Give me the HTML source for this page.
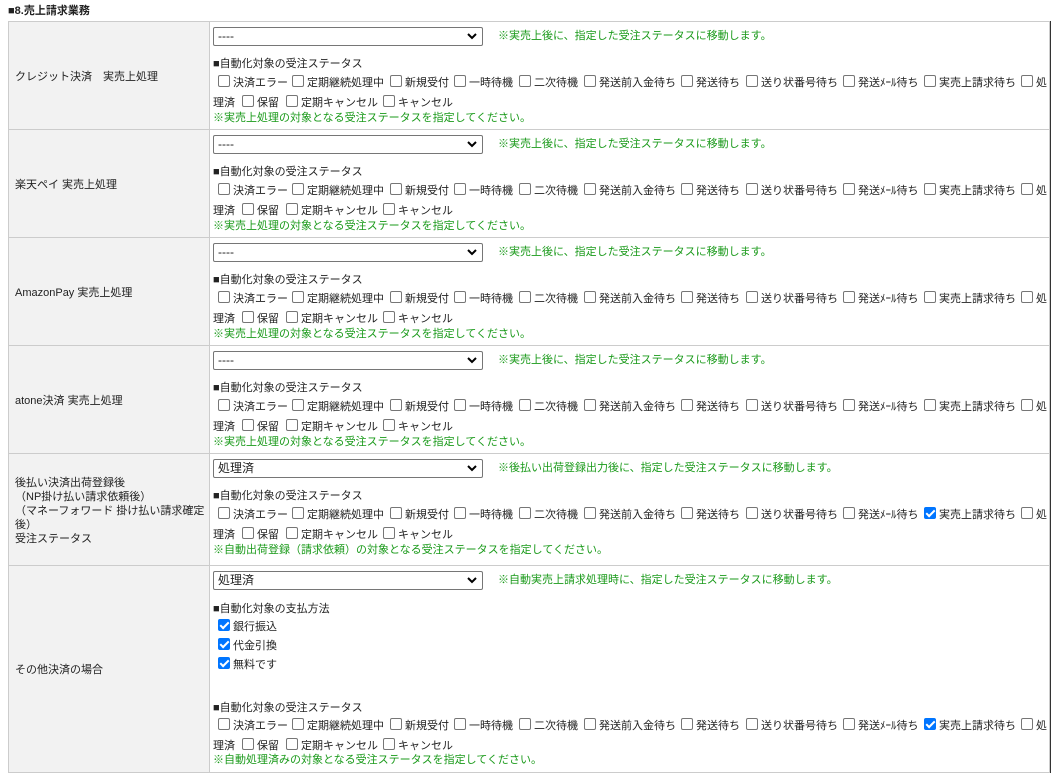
<!DOCTYPE html>
<html><head><meta charset="utf-8"><style>
*{box-sizing:border-box}
body{margin:0;width:1057px;height:780px;background:#fff;font-family:"Liberation Sans","Noto Sans CJK JP",sans-serif;font-size:11px;color:#222;position:relative;overflow:hidden}
.a{position:absolute;white-space:nowrap;line-height:16px;height:16px;margin-top:1px}
.row{position:absolute;left:8px;width:1042px;border:1px solid #ccc;border-bottom:none}
.lab{position:absolute;left:0;top:0;bottom:0;width:201px;background:#f2f2f2;border-right:1px solid #ccc}
.lt{position:absolute;left:6px;right:2px;top:50%;transform:translateY(-50%);line-height:14px;margin-top:1px}
.sel{position:absolute;left:204px;width:270px;height:19px;border:1px solid #767676;border-radius:2px;background:#fff;padding-left:4px;line-height:17px;font-size:12px}
.sel svg{position:absolute;right:5px;top:5px}
.g{color:#1a9a1a}
.cb{display:inline-block;width:12px;height:12px;border:1px solid #767676;border-radius:2px;vertical-align:-1px;background:#fff}
.ck{display:inline-block;width:12px;height:12px;border-radius:2px;vertical-align:-1px;background:#0075ff;position:relative}
.ck:after{content:"";position:absolute;left:4px;top:1px;width:3px;height:7px;border:solid #fff;border-width:0 2px 2px 0;transform:rotate(45deg)}
.i{position:absolute}
</style></head><body>
<div class="a" style="left:8px;top:2px;font-weight:bold;font-size:11px">■8.売上請求業務</div>

<div class="row" style="top:21px;height:108px"><div class="lab"><div class="lt">クレジット決済　実売上処理</div></div>
<div class="sel" style="top:5px">----<svg width="10" height="7"><path d="M1 1L5 5L9 1" stroke="#000" stroke-width="2" fill="none"/></svg></div>
<div class="a g" style="left:489px;top:5px">※実売上後に、指定した受注ステータスに移動します。</div>
<div class="a" style="left:204px;top:33px">■自動化対象の受注ステータス</div>
<div class="a" style="left:0;top:52px;width:1042px"><span class="i" style="left:209px"><span class="cb"></span> 決済エラー</span><span class="i" style="left:283px"><span class="cb"></span> 定期継続処理中</span><span class="i" style="left:381px"><span class="cb"></span> 新規受付</span><span class="i" style="left:445px"><span class="cb"></span> 一時待機</span><span class="i" style="left:510px"><span class="cb"></span> 二次待機</span><span class="i" style="left:575px"><span class="cb"></span> 発送前入金待ち</span><span class="i" style="left:672px"><span class="cb"></span> 発送待ち</span><span class="i" style="left:737px"><span class="cb"></span> 送り状番号待ち</span><span class="i" style="left:834px"><span class="cb"></span> 発送ﾒｰﾙ待ち</span><span class="i" style="left:915px"><span class="cb"></span> 実売上請求待ち</span><span class="i" style="left:1012px"><span class="cb"></span> 処</span></div>
<div class="a" style="left:0;top:72px;width:1042px"><span class="i" style="left:204px">理済</span><span class="i" style="left:233px"><span class="cb"></span> 保留</span><span class="i" style="left:277px"><span class="cb"></span> 定期キャンセル</span><span class="i" style="left:374px"><span class="cb"></span> キャンセル</span></div>
<div class="a g" style="left:204px;top:87px">※実売上処理の対象となる受注ステータスを指定してください。</div>
</div>

<div class="row" style="top:129px;height:108px"><div class="lab"><div class="lt">楽天ペイ 実売上処理</div></div>
<div class="sel" style="top:5px">----<svg width="10" height="7"><path d="M1 1L5 5L9 1" stroke="#000" stroke-width="2" fill="none"/></svg></div>
<div class="a g" style="left:489px;top:5px">※実売上後に、指定した受注ステータスに移動します。</div>
<div class="a" style="left:204px;top:33px">■自動化対象の受注ステータス</div>
<div class="a" style="left:0;top:52px;width:1042px"><span class="i" style="left:209px"><span class="cb"></span> 決済エラー</span><span class="i" style="left:283px"><span class="cb"></span> 定期継続処理中</span><span class="i" style="left:381px"><span class="cb"></span> 新規受付</span><span class="i" style="left:445px"><span class="cb"></span> 一時待機</span><span class="i" style="left:510px"><span class="cb"></span> 二次待機</span><span class="i" style="left:575px"><span class="cb"></span> 発送前入金待ち</span><span class="i" style="left:672px"><span class="cb"></span> 発送待ち</span><span class="i" style="left:737px"><span class="cb"></span> 送り状番号待ち</span><span class="i" style="left:834px"><span class="cb"></span> 発送ﾒｰﾙ待ち</span><span class="i" style="left:915px"><span class="cb"></span> 実売上請求待ち</span><span class="i" style="left:1012px"><span class="cb"></span> 処</span></div>
<div class="a" style="left:0;top:72px;width:1042px"><span class="i" style="left:204px">理済</span><span class="i" style="left:233px"><span class="cb"></span> 保留</span><span class="i" style="left:277px"><span class="cb"></span> 定期キャンセル</span><span class="i" style="left:374px"><span class="cb"></span> キャンセル</span></div>
<div class="a g" style="left:204px;top:87px">※実売上処理の対象となる受注ステータスを指定してください。</div>
</div>

<div class="row" style="top:237px;height:108px"><div class="lab"><div class="lt">AmazonPay 実売上処理</div></div>
<div class="sel" style="top:5px">----<svg width="10" height="7"><path d="M1 1L5 5L9 1" stroke="#000" stroke-width="2" fill="none"/></svg></div>
<div class="a g" style="left:489px;top:5px">※実売上後に、指定した受注ステータスに移動します。</div>
<div class="a" style="left:204px;top:33px">■自動化対象の受注ステータス</div>
<div class="a" style="left:0;top:52px;width:1042px"><span class="i" style="left:209px"><span class="cb"></span> 決済エラー</span><span class="i" style="left:283px"><span class="cb"></span> 定期継続処理中</span><span class="i" style="left:381px"><span class="cb"></span> 新規受付</span><span class="i" style="left:445px"><span class="cb"></span> 一時待機</span><span class="i" style="left:510px"><span class="cb"></span> 二次待機</span><span class="i" style="left:575px"><span class="cb"></span> 発送前入金待ち</span><span class="i" style="left:672px"><span class="cb"></span> 発送待ち</span><span class="i" style="left:737px"><span class="cb"></span> 送り状番号待ち</span><span class="i" style="left:834px"><span class="cb"></span> 発送ﾒｰﾙ待ち</span><span class="i" style="left:915px"><span class="cb"></span> 実売上請求待ち</span><span class="i" style="left:1012px"><span class="cb"></span> 処</span></div>
<div class="a" style="left:0;top:72px;width:1042px"><span class="i" style="left:204px">理済</span><span class="i" style="left:233px"><span class="cb"></span> 保留</span><span class="i" style="left:277px"><span class="cb"></span> 定期キャンセル</span><span class="i" style="left:374px"><span class="cb"></span> キャンセル</span></div>
<div class="a g" style="left:204px;top:87px">※実売上処理の対象となる受注ステータスを指定してください。</div>
</div>

<div class="row" style="top:345px;height:108px"><div class="lab"><div class="lt">atone決済 実売上処理</div></div>
<div class="sel" style="top:5px">----<svg width="10" height="7"><path d="M1 1L5 5L9 1" stroke="#000" stroke-width="2" fill="none"/></svg></div>
<div class="a g" style="left:489px;top:5px">※実売上後に、指定した受注ステータスに移動します。</div>
<div class="a" style="left:204px;top:33px">■自動化対象の受注ステータス</div>
<div class="a" style="left:0;top:52px;width:1042px"><span class="i" style="left:209px"><span class="cb"></span> 決済エラー</span><span class="i" style="left:283px"><span class="cb"></span> 定期継続処理中</span><span class="i" style="left:381px"><span class="cb"></span> 新規受付</span><span class="i" style="left:445px"><span class="cb"></span> 一時待機</span><span class="i" style="left:510px"><span class="cb"></span> 二次待機</span><span class="i" style="left:575px"><span class="cb"></span> 発送前入金待ち</span><span class="i" style="left:672px"><span class="cb"></span> 発送待ち</span><span class="i" style="left:737px"><span class="cb"></span> 送り状番号待ち</span><span class="i" style="left:834px"><span class="cb"></span> 発送ﾒｰﾙ待ち</span><span class="i" style="left:915px"><span class="cb"></span> 実売上請求待ち</span><span class="i" style="left:1012px"><span class="cb"></span> 処</span></div>
<div class="a" style="left:0;top:72px;width:1042px"><span class="i" style="left:204px">理済</span><span class="i" style="left:233px"><span class="cb"></span> 保留</span><span class="i" style="left:277px"><span class="cb"></span> 定期キャンセル</span><span class="i" style="left:374px"><span class="cb"></span> キャンセル</span></div>
<div class="a g" style="left:204px;top:87px">※実売上処理の対象となる受注ステータスを指定してください。</div>
</div>

<div class="row" style="top:453px;height:112px"><div class="lab"><div class="lt">後払い決済出荷登録後<br>（NP掛け払い請求依頼後）<br>（マネーフォワード 掛け払い請求確定<br>後）<br>受注ステータス</div></div>
<div class="sel" style="top:5px">処理済<svg width="10" height="7"><path d="M1 1L5 5L9 1" stroke="#000" stroke-width="2" fill="none"/></svg></div>
<div class="a g" style="left:489px;top:5px">※後払い出荷登録出力後に、指定した受注ステータスに移動します。</div>
<div class="a" style="left:204px;top:33px">■自動化対象の受注ステータス</div>
<div class="a" style="left:0;top:52px;width:1042px"><span class="i" style="left:209px"><span class="cb"></span> 決済エラー</span><span class="i" style="left:283px"><span class="cb"></span> 定期継続処理中</span><span class="i" style="left:381px"><span class="cb"></span> 新規受付</span><span class="i" style="left:445px"><span class="cb"></span> 一時待機</span><span class="i" style="left:510px"><span class="cb"></span> 二次待機</span><span class="i" style="left:575px"><span class="cb"></span> 発送前入金待ち</span><span class="i" style="left:672px"><span class="cb"></span> 発送待ち</span><span class="i" style="left:737px"><span class="cb"></span> 送り状番号待ち</span><span class="i" style="left:834px"><span class="cb"></span> 発送ﾒｰﾙ待ち</span><span class="i" style="left:915px"><span class="ck"></span> 実売上請求待ち</span><span class="i" style="left:1012px"><span class="cb"></span> 処</span></div>
<div class="a" style="left:0;top:72px;width:1042px"><span class="i" style="left:204px">理済</span><span class="i" style="left:233px"><span class="cb"></span> 保留</span><span class="i" style="left:277px"><span class="cb"></span> 定期キャンセル</span><span class="i" style="left:374px"><span class="cb"></span> キャンセル</span></div>
<div class="a g" style="left:204px;top:87px">※自動出荷登録（請求依頼）の対象となる受注ステータスを指定してください。</div>
</div>

<div class="row" style="top:565px;height:208px;border-bottom:1px solid #ccc"><div class="lab"><div class="lt">その他決済の場合</div></div>
<div class="sel" style="top:5px">処理済<svg width="10" height="7"><path d="M1 1L5 5L9 1" stroke="#000" stroke-width="2" fill="none"/></svg></div>
<div class="a g" style="left:489px;top:5px">※自動実売上請求処理時に、指定した受注ステータスに移動します。</div>
<div class="a" style="left:204px;top:34px">■自動化対象の支払方法</div>
<div class="a" style="left:209px;top:52px"><span class="ck"></span> 銀行振込</div>
<div class="a" style="left:209px;top:71px"><span class="ck"></span> 代金引換</div>
<div class="a" style="left:209px;top:90px"><span class="ck"></span> 無料です</div>
<div class="a" style="left:204px;top:133px">■自動化対象の受注ステータス</div>
<div class="a" style="left:0;top:151px;width:1042px"><span class="i" style="left:209px"><span class="cb"></span> 決済エラー</span><span class="i" style="left:283px"><span class="cb"></span> 定期継続処理中</span><span class="i" style="left:381px"><span class="cb"></span> 新規受付</span><span class="i" style="left:445px"><span class="cb"></span> 一時待機</span><span class="i" style="left:510px"><span class="cb"></span> 二次待機</span><span class="i" style="left:575px"><span class="cb"></span> 発送前入金待ち</span><span class="i" style="left:672px"><span class="cb"></span> 発送待ち</span><span class="i" style="left:737px"><span class="cb"></span> 送り状番号待ち</span><span class="i" style="left:834px"><span class="cb"></span> 発送ﾒｰﾙ待ち</span><span class="i" style="left:915px"><span class="ck"></span> 実売上請求待ち</span><span class="i" style="left:1012px"><span class="cb"></span> 処</span></div>
<div class="a" style="left:0;top:171px;width:1042px"><span class="i" style="left:204px">理済</span><span class="i" style="left:233px"><span class="cb"></span> 保留</span><span class="i" style="left:277px"><span class="cb"></span> 定期キャンセル</span><span class="i" style="left:374px"><span class="cb"></span> キャンセル</span></div>
<div class="a g" style="left:204px;top:185px">※自動処理済みの対象となる受注ステータスを指定してください。</div>
</div>
<div style="position:absolute;left:1050px;top:21px;width:1px;height:752px;background:#333"></div>
</body></html>
